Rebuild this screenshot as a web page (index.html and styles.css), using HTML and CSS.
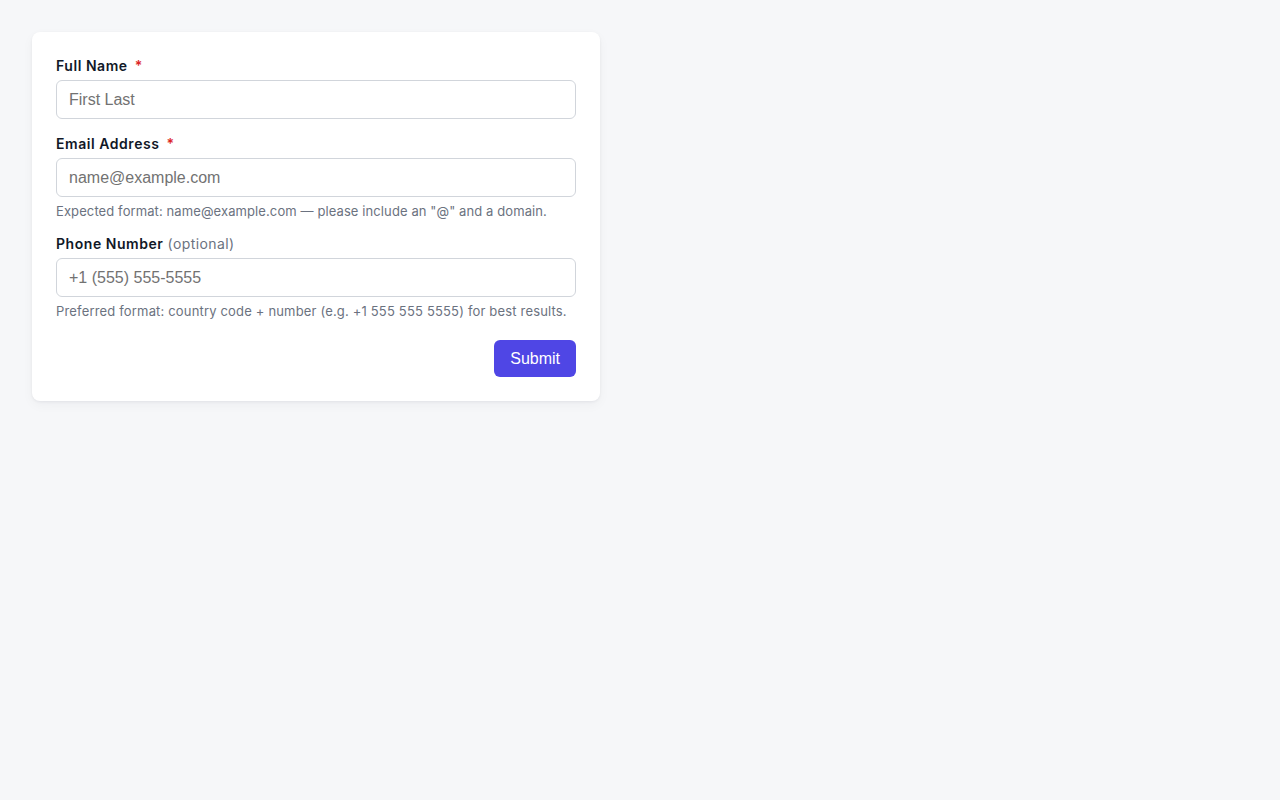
FILE: index.html
```html
<!DOCTYPE html>
<html lang="en">
<head>
<meta charset="utf-8">
<title>Contact form</title>
<link rel="stylesheet" href="styles.css">
</head>
<body>
<form class="card">
  <div class="field">
    <label class="label" for="name">Full Name <span class="req">*</span></label>
    <input class="input" id="name" type="text" placeholder="First Last">
  </div>
  <div class="field">
    <label class="label" for="email">Email Address <span class="req">*</span></label>
    <input class="input" id="email" type="email" placeholder="name@example.com">
    <p class="hint">Expected format: name@example.com — please include an "@" and a domain.</p>
  </div>
  <div class="field">
    <label class="label" for="phone">Phone Number <span class="opt">(optional)</span></label>
    <input class="input" id="phone" type="tel" placeholder="+1 (555) 555-5555">
    <p class="hint hint-wide">Preferred format: country code + number (e.g. +1 555 555 5555) for best results.</p>
  </div>
  <div class="actions">
    <button class="btn" type="button">Submit</button>
  </div>
</form>
</body>
</html>
```

FILE: styles.css
```css
* { box-sizing: border-box; }
html, body { margin: 0; }
body {
  background: #f6f7f9;
  padding: 32px;
  font-family: Inter, "Liberation Sans", sans-serif;
  color: #111827;
  min-height: 800px;
}
.card {
  width: 568px;
  background: #ffffff;
  border-radius: 8px;
  box-shadow: 0 1px 3px rgba(17, 24, 39, 0.06), 0 4px 12px rgba(17, 24, 39, 0.04);
  padding: 24px;
  display: flex;
  flex-direction: column;
  gap: 15px;
}
.field {
  display: flex;
  flex-direction: column;
}
.label {
  font-size: 14px;
  line-height: 20px;
  font-weight: 600;
  letter-spacing: 0.55px;
  color: #111827;
  margin-bottom: 4px;
}
.req {
  color: #dc2626;
  margin-left: 3px;
}
.opt {
  color: #6b7280;
  font-weight: 400;
  letter-spacing: 0.4px;
}
.input {
  width: 100%;
  height: 39px;
  border: 1px solid #d1d5db;
  border-radius: 6px;
  padding: 0 12px;
  font-family: "Liberation Sans", Arial, sans-serif;
  font-size: 16px;
  color: #111827;
  background: #fff;
  outline: none;
}
.input::placeholder { color: #727272; opacity: 1; }
.hint {
  margin: 6px 0 0;
  font-size: 13px;
  line-height: 16px;
  letter-spacing: 0.1px;
  color: #6b7280;
}
.hint-wide { letter-spacing: 0.17px; }
.actions {
  display: flex;
  justify-content: flex-end;
  margin-top: 6px;
}
.btn {
  height: 37px;
  padding: 0 16px;
  border: 0;
  border-radius: 6px;
  background: #4f46e5;
  color: #fff;
  font-family: "Liberation Sans", Arial, sans-serif;
  font-size: 16px;
  cursor: pointer;
}
```
